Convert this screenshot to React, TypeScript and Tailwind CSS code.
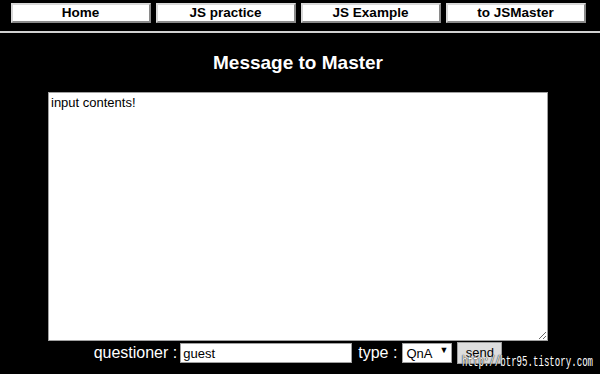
import { useState } from 'react';

const navItems = ['Home', 'JS practice', 'JS Example', 'to JSMaster'];

export default function App() {
  const [text, setText] = useState('input contents!');
  const [name, setName] = useState('guest');

  return (
    <div
      className="relative w-[600px] h-[374px] overflow-hidden bg-black text-white"
      style={{ fontFamily: '"Liberation Sans", Arial, sans-serif' }}
    >
      {/* Nav */}
      <div className="flex justify-center gap-[5px] pt-[3px] pr-[4px]">
        {navItems.map((item) => (
          <button
            key={item}
            className="w-[140px] h-[20px] bg-white text-black text-[13.5px] font-bold leading-none border-2 border-t-[#d8d8d8] border-l-[#d8d8d8] border-b-[#8a8a8a] border-r-[#8a8a8a]"
          >
            {item}
          </button>
        ))}
      </div>
      <div className="mt-[8px] h-[2px] bg-[#d0d0d0]" />

      {/* Title */}
      <h1 className="mt-[19px] text-center text-[19px] font-bold leading-[22px] pr-[4px]">Message to Master</h1>

      {/* Form */}
      <div className="mt-[18px] ml-[48px]">
        <textarea
          value={text}
          onChange={(e) => setText(e.target.value)}
          className="block w-[500px] h-[249px] bg-white text-black text-[13px] leading-[15px] px-[2px] py-[2px] border border-[#a0a0a0] resize-y outline-none"
        />
      </div>
      <div className="flex items-center justify-center gap-[3px] pr-[4px] text-[16px]">
        <span>questioner :</span>
        <input
          value={name}
          onChange={(e) => setName(e.target.value)}
          className="w-[172px] h-[20px] bg-white text-black text-[13px] px-[2px] border border-[#a0a0a0] outline-none"
        />
        <span className="ml-[3px]">type :</span>
        <div className="relative ml-[2px]">
          <select className="appearance-none w-[50px] h-[20px] bg-white text-black text-[13px] pl-[3px] border border-[#a0a0a0] outline-none">
            <option>QnA</option>
            <option>etc</option>
          </select>
          <span className="pointer-events-none absolute right-[4px] top-[3px] text-[9px] text-black">▼</span>
        </div>
        <button className="ml-[2px] w-[45px] h-[22px] bg-[#dddddd] text-black text-[13px] border border-[#a0a0a0]">
          send
        </button>
      </div>

      {/* Watermark */}
      <div
        className="absolute left-[462px] top-[354px] text-[14px] leading-[17px] text-white origin-left scale-x-[0.65] whitespace-nowrap"
        style={{ fontFamily: '"Liberation Mono", monospace', textShadow: '0 0 2px #000, 0 0 1px #000' }}
      >
        http://btr95.tistory.com
      </div>
    </div>
  );
}
